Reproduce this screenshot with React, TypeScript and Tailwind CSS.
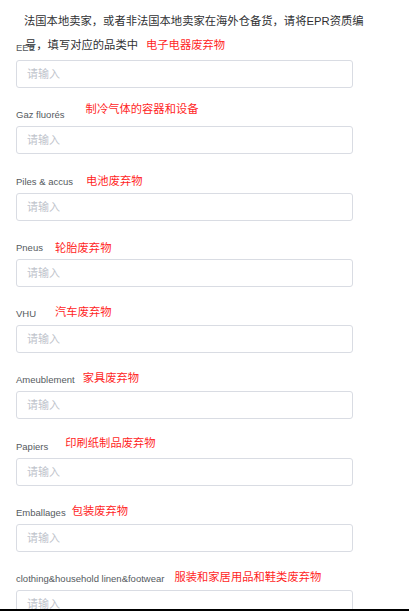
import React from "react";

const items = [
  { label: "Gaz fluorés", red: "制冷气体的容器和设备", cls: "ml-[21px] -translate-y-[6px]" },
  { label: "Piles & accus", red: "电池废弃物", cls: "ml-[13px] -translate-y-[1px]" },
  { label: "Pneus", red: "轮胎废弃物", cls: "ml-[12px] translate-y-[0px]" },
  { label: "VHU", red: "汽车废弃物", cls: "ml-[19px] -translate-y-[2px]" },
  { label: "Ameublement", red: "家具废弃物", cls: "ml-[8px] -translate-y-[2px]" },
  { label: "Papiers", red: "印刷纸制品废弃物", cls: "ml-[17px] -translate-y-[4px]" },
  { label: "Emballages", red: "包装废弃物", cls: "ml-[6px] -translate-y-[2px]" },
  { label: "clothing&household linen&footwear", red: "服装和家居用品和鞋类废弃物", cls: "ml-[10px] -translate-y-[2.5px]" },
];

const cjk = "font-['Liberation_Sans','Noto_Sans_CJK_SC',sans-serif]";

function Field() {
  return (
    <input
      placeholder="请输入"
      className={`block w-[337px] h-[28px] border border-[#d9dce3] rounded-[3px] px-[10px] text-[11px] text-[#333] placeholder:text-[#c0c4cc] outline-none bg-white ${cjk}`}
    />
  );
}

export default function App() {
  return (
    <div className={`w-[409px] h-[611px] bg-white flex flex-col ${cjk}`}>
      <div className="flex-1 overflow-hidden px-[16px]">
        <div className="relative h-[60px] pt-[9px]">
          <div className="pl-[8px] text-[11.3px] leading-[24px] text-[#303133]">
            <div>法国本地卖家，或者非法国本地卖家在海外仓备货，请将EPR资质编</div>
            <div className="flex items-center pl-[1px]">
              <span>号，填写对应的品类中</span>
              <span className="ml-[8px] text-[#ff1f1f]">电子电器废弃物</span>
            </div>
          </div>
          <span className="absolute left-0 top-[42px] text-[9.5px] leading-[12px] text-[#555a60]">EEE</span>
        </div>
        <Field />
        {items.map((it) => (
          <div key={it.label}>
            <div className="h-[38.25px] flex items-end pb-[5px]">
              <span className="text-[9.5px] leading-[12px] text-[#555a60] whitespace-nowrap">{it.label}</span>
              <span className={`text-[11.3px] leading-[12px] text-[#ff1f1f] whitespace-nowrap ${it.cls}`}>{it.red}</span>
            </div>
            <Field />
          </div>
        ))}
      </div>
      <div className="h-[2px] bg-black" />
    </div>
  );
}
